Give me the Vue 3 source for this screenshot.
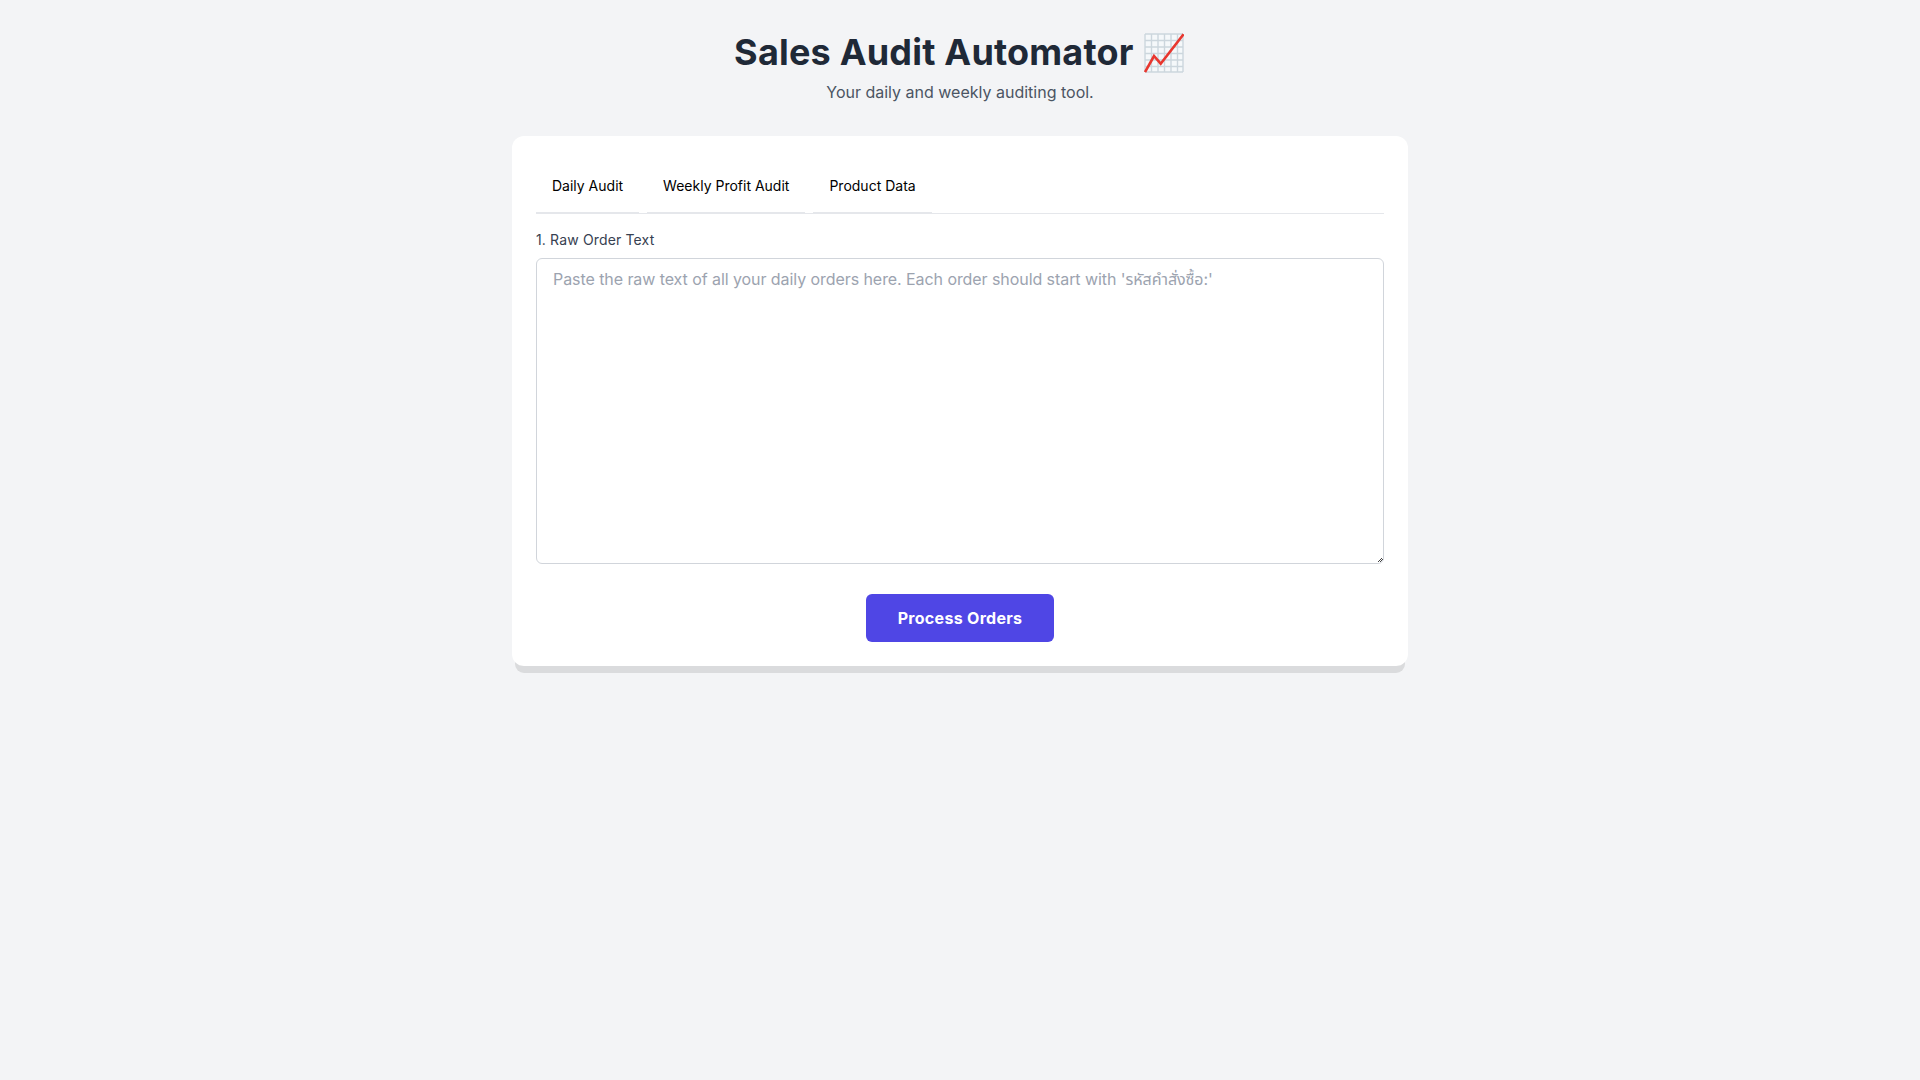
<template>
    <div class="page">
        <header class="page-header">
            <h1 class="page-title">
                Sales Audit Automator
                <svg class="chart-icon" viewBox="0 0 40 40" aria-hidden="true">
                    <rect x="0.5" y="0.5" width="39" height="39" fill="#f5f8fa" />
                    <path
                        d="M1 1H39M1 7.5H39M1 14H39M1 20.5H39M1 27H39M1 33.5H39M1 39H39M1 1V39M7.5 1V39M14 1V39M20.5 1V39M27 1V39M33.5 1V39M39 1V39"
                        fill="none"
                        stroke="#ccd6dd"
                        stroke-width="1.4"
                    />
                    <path
                        d="M1 39L10 23L16.7 30.7L39.5 1.2"
                        fill="none"
                        stroke="#e8372f"
                        stroke-width="2.6"
                    />
                </svg>
            </h1>
            <p class="page-subtitle">Your daily and weekly auditing tool.</p>
        </header>

        <main class="card">
            <nav class="tabs">
                <button v-for="tab in tabs" :key="tab" class="tab" type="button">{{ tab }}</button>
            </nav>

            <section class="audit-form">
                <label class="field-label" for="raw-orders">1. Raw Order Text</label>
                <textarea
                    id="raw-orders"
                    class="field-input"
                    placeholder="Paste the raw text of all your daily orders here. Each order should start with 'รหัสคำสั่งซื้อ:'"
                ></textarea>
                <div class="actions">
                    <button class="primary-button" type="button">Process Orders</button>
                </div>
            </section>
        </main>
    </div>
</template>

<script setup>
const tabs = ['Daily Audit', 'Weekly Profit Audit', 'Product Data']
</script>

<style>
html,
body {
    background-color: #f3f4f6;
}
</style>

<style scoped>
.page {
    min-height: 1080px;
    box-sizing: border-box;
    padding-top: 32px;
    font-family: Inter, "Noto Sans Thai", "Noto Sans", sans-serif;
    font-optical-sizing: none;
    background-color: #f3f4f6;
}

.page-header {
    text-align: center;
    margin-bottom: 32px;
}

.page-title {
    height: 40px;
    margin: 0;
    font-size: 36px;
    line-height: 40px;
    font-weight: 700;
    letter-spacing: 0.2px;
    color: #1f2937;
}

.chart-icon {
    display: inline-block;
    width: 40px;
    height: 40px;
    margin: 0 1.5px 0 2px;
    vertical-align: -8px;
}

.page-subtitle {
    margin: 8px 0 0;
    font-size: 16px;
    line-height: 24px;
    color: #4b5563;
}

.card {
    box-sizing: border-box;
    width: 896px;
    margin: 0 auto;
    padding: 24px;
    background-color: #ffffff;
    border-radius: 12px;
    box-shadow: 0 10px 0 -3px rgba(0, 0, 0, 0.1), 0 4px 0 -4px rgba(0, 0, 0, 0.1);
}

.tabs {
    display: flex;
    gap: 8px;
    border-bottom: 1px solid #e5e7eb;
}

.tab {
    padding: 16px;
    margin-bottom: -1px;
    border: 0;
    border-bottom: 2px solid #e5e7eb;
    background: none;
    font-family: inherit;
    font-size: 14px;
    line-height: 20px;
    font-weight: 400;
    color: #000000;
}

.audit-form {
    padding-top: 16px;
}

.field-label {
    display: block;
    margin-bottom: 8px;
    font-size: 14px;
    line-height: 20px;
    font-weight: 400;
    letter-spacing: 0.15px;
    color: #374151;
}

.field-input {
    display: block;
    box-sizing: border-box;
    width: 100%;
    height: 306px;
    padding: 8px 16px;
    border: 1px solid #d1d5db;
    border-radius: 6px;
    font-family: inherit;
    font-size: 16px;
    line-height: 24px;
    letter-spacing: -0.07px;
    color: #111827;
}

.field-input::placeholder {
    color: #9ca3af;
}

/* small dotted grip, the default one is too big */
.field-input::-webkit-resizer {
    background-color: transparent;
    background-image:
        linear-gradient(#444, #444), linear-gradient(#444, #444), linear-gradient(#444, #444),
        linear-gradient(#444, #444), linear-gradient(#444, #444), linear-gradient(#444, #444),
        linear-gradient(#444, #444);
    background-size: 1px 1px;
    background-repeat: no-repeat;
    background-position:
        13px 10px, 12px 11px, 14px 11px,
        11px 12px, 13px 12px, 10px 13px,
        12px 13px;
}

.actions {
    display: flex;
    justify-content: center;
    margin-top: 30px;
}

.primary-button {
    padding: 12px 32px;
    border: 0;
    border-radius: 6px;
    background-color: #4f46e5;
    font-family: inherit;
    font-size: 16px;
    line-height: 24px;
    font-weight: 700;
    letter-spacing: 0.3px;
    color: #ffffff;
}
</style>
